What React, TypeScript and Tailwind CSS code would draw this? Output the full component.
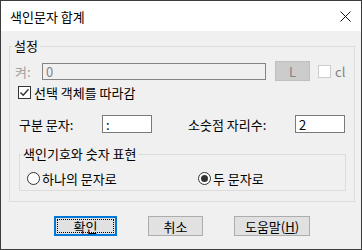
import React from 'react';

const FONT = "font-['Noto_Sans_CJK_KR',sans-serif]";

const Check: React.FC<{ checked?: boolean; disabled?: boolean }> = ({ checked, disabled }) => (
  <div
    className={`w-[13px] h-[13px] shrink-0 border flex items-center justify-center bg-white ${
      disabled ? 'border-[#cccccc]' : 'border-[#333333]'
    }`}
  >
    {checked && (
      <svg width="11" height="11" viewBox="0 0 11 11">
        <path d="M1.5 5.5 L4.2 8.3 L9.5 2.2" fill="none" stroke="#333" strokeWidth="1.4" />
      </svg>
    )}
  </div>
);

const Radio: React.FC<{ checked?: boolean }> = ({ checked }) => (
  <svg width="13" height="13" viewBox="0 0 13 13" className="shrink-0">
    <circle cx="6.5" cy="6.5" r="6" fill="#fff" stroke="#333" strokeWidth="1" />
    {checked && <circle cx="6.5" cy="6.5" r="3.5" fill="#333" />}
  </svg>
);

const App: React.FC = () => {
  return (
    <div className={`w-[362px] h-[250px] border border-[#3c3c3c] flex flex-col bg-[#f0f0f0] text-[13px] text-black ${FONT}`}>
      {/* title bar */}
      <div className="h-[30px] bg-white flex items-center justify-between pl-[9px] pr-[10px]">
        <span className="leading-none text-black">색인문자 합계</span>
        <svg width="11" height="11" viewBox="0 0 11 11">
          <path d="M0.5 0.5 L10.5 10.5 M10.5 0.5 L0.5 10.5" stroke="#111" strokeWidth="1" />
        </svg>
      </div>

      {/* body */}
      <div className="flex-1 flex flex-col">
        <div className="relative mt-[15px] ml-[8px] w-[346px] border border-[#dcdcdc] flex flex-col">
          <span className="absolute -top-[8px] left-[2px] px-[2px] bg-[#f0f0f0] leading-[14px]">설정</span>

          {/* row 1 */}
          <div className="mt-[14px] pl-[5px] flex items-center h-[20px]">
            <span className="w-[27px] text-[#a0a0a0] leading-none">켜:</span>
            <div className="w-[224px] h-[17px] border border-[#838383] flex items-center pl-[3px] text-[#838383] leading-none">0</div>
            <div className="ml-[9px] w-[35px] h-[20px] bg-[#cccccc] border border-[#bfbfbf] flex items-center justify-center text-[#838383] leading-none">L</div>
            <div className="ml-[8px]">
              <Check disabled />
            </div>
            <span className="ml-[4px] text-[#838383] leading-none">cl</span>
          </div>

          {/* row 2 */}
          <div className="mt-[5px] pl-[8px] flex items-center h-[13px]">
            <Check checked />
            <span className="ml-[3px] leading-none">선택 객체를 따라감</span>
          </div>

          {/* row 3 */}
          <div className="mt-[16px] pl-[9px] flex items-center h-[18px]">
            <span className="w-[83px] leading-none">구분 문자:</span>
            <div className="w-[50px] h-[18px] border border-[#7a7a7a] bg-white flex items-center pl-[3px] leading-none">:</div>
            <span className="ml-[36px] w-[107px] leading-none">소숫점 자리수:</span>
            <div className="w-[50px] h-[18px] border border-[#7a7a7a] bg-white flex items-center pl-[3px] leading-none">2</div>
          </div>

          {/* group 2 */}
          <div className="relative mt-[21px] mb-[10px] ml-[9px] w-[327px] h-[37px] border border-[#dcdcdc] flex items-start">
            <span className="absolute -top-[8px] left-[1px] px-[2px] bg-[#f0f0f0] leading-[14px]">색인기호와 숫자 표현</span>
            <div className="mt-[17px] pl-[7px] flex items-center w-[178px]">
              <Radio />
              <span className="ml-[2px] leading-none">하나의 문자로</span>
            </div>
            <div className="mt-[17px] flex items-center">
              <Radio checked />
              <span className="ml-[2px] leading-none">두 문자로</span>
            </div>
          </div>
        </div>

        {/* buttons */}
        <div className="mt-[14px] ml-[53px] flex items-center">
          <div className="w-[63px] h-[20px] border-2 border-[#0078d7] bg-[#e1e1e1] p-[1px]">
            <div className="w-full h-full border border-dotted border-black flex items-center justify-center leading-none">확인</div>
          </div>
          <div className="ml-[31px] w-[55px] h-[20px] border border-[#adadad] bg-[#e1e1e1] flex items-center justify-center leading-none">취소</div>
          <div className="ml-[31px] w-[76px] h-[20px] border border-[#adadad] bg-[#e1e1e1] flex items-center justify-center leading-none">
            도움말(<span className="underline">H</span>)
          </div>
        </div>
      </div>
    </div>
  );
};

export default App;
